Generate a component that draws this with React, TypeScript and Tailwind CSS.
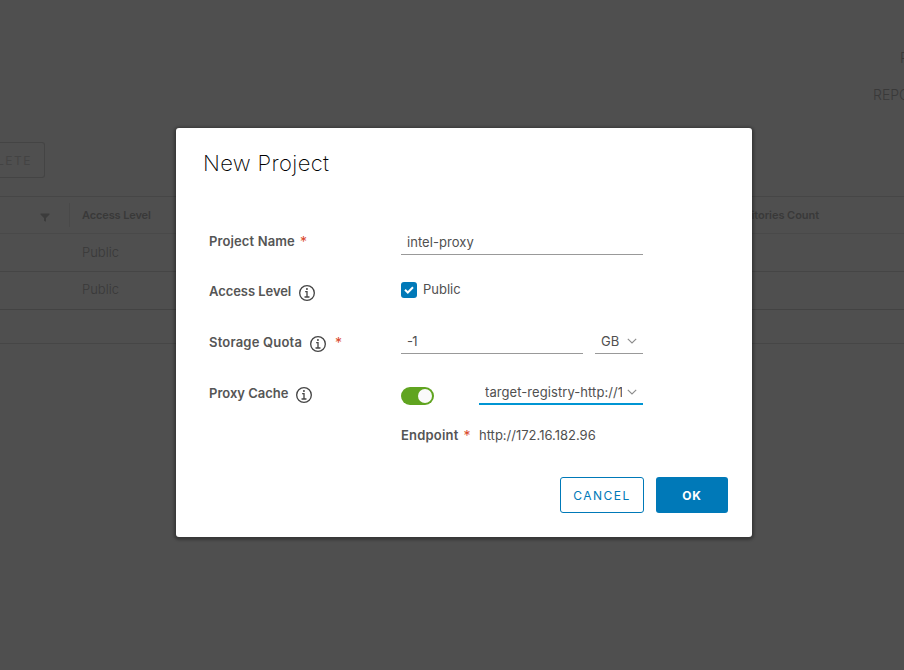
import type { ReactNode } from "react";

function InfoIcon({ className }: { className: string }) {
  return (
    <svg viewBox="6 6 24 24" className={`size-4 shrink-0 fill-[#454545] ${className}`}>
      <circle cx="17.93" cy="11.9" r="1.5" />
      <path d="M21,23H19V15H16a1,1,0,0,0,0,2h1v6H15a1,1,0,1,0,0,2h6a1,1,0,0,0,0-2Z" />
      <path d="M18,6A12,12,0,1,0,30,18,12,12,0,0,0,18,6Zm0,22A10,10,0,1,1,28,18,10,10,0,0,1,18,28Z" />
    </svg>
  );
}

function Chevron() {
  return (
    <svg viewBox="0 0 10 6" className="mt-[-1px] h-1.5 w-2.5 shrink-0 fill-none stroke-[#8c8c8c]">
      <path d="M0.8 0.8 5 5 9.2 0.8" strokeWidth="1.1" />
    </svg>
  );
}

function Required({ className }: { className: string }) {
  return <span className={`text-[14px] font-normal leading-4 text-[#d9472b] ${className}`}>*</span>;
}

function Label({ text, spacing, children }: { text: string; spacing: string; children?: ReactNode }) {
  return (
    <div className="flex h-full w-48 shrink-0 items-center">
      <span className={`text-[13px] font-semibold text-[#555] ${spacing}`}>{text}</span>
      {children}
    </div>
  );
}

function Backdrop() {
  return (
    <div className="flex h-[670px] w-[904px] flex-col overflow-hidden text-[#393939]">
      <div className="flex h-[142px] flex-col items-end pt-[48px] text-[14px] font-light">
        <div className="h-[37px] w-[4px] whitespace-nowrap leading-5">PROJECTS</div>
        <div className="w-[31px] whitespace-nowrap leading-5">REPOSITORIES</div>
      </div>
      <div className="flex h-9 w-[45px] items-center justify-end rounded-r-[3px] border border-l-0 border-[#444] pr-[12px] pt-px text-[12px] tracking-[1.5px] text-[#434343]">
        <span>DELETE</span>
      </div>
      <div className="mt-[18px] flex h-[38px] items-center border-y border-t-[#464646] border-b-[#494949] text-[11px] font-semibold">
        <div className="flex w-[69px] shrink-0 justify-end pr-[19px] pt-1">
          <svg viewBox="0 0 10 9" className="h-[9px] w-[10px] fill-[#3c3c3c]">
            <path d="M0.5 0.5h9v1L6 5v3.7L4 7.8V5L0.5 1.5Z" />
          </svg>
        </div>
        <div className="h-6 w-px shrink-0 bg-[#494949]" />
        <div className="w-[649px] shrink-0 pl-3 tracking-[-0.12px]">Access Level</div>
        <div className="flex w-[100px] shrink-0 justify-end whitespace-nowrap tracking-[-0.05px]">Repositories Count</div>
      </div>
      <div className="flex h-[38px] items-center border-b border-[#454545] pl-[82px] text-[13px] font-light">Public</div>
      <div className="flex h-[38px] items-center border-b border-[#434343] pb-px pl-[82px] text-[13px] font-light">Public</div>
      <div className="h-[34px] border-b border-[#464646]" />
    </div>
  );
}

export default function App() {
  return (
    <div className="relative h-[670px] w-[904px] overflow-hidden bg-[#4f4f4f] font-['Inter',sans-serif]">
      <Backdrop />
      <div className="absolute inset-0 pl-44 pt-32">
        <section className="flex h-[409px] w-[576px] flex-col rounded-[3px] bg-white text-[13px] text-[#505050] shadow-[0_1px_3px_2px_rgba(0,0,0,0.3)]">
          <h1 className="flex h-[88px] items-start pl-[27px] pt-[20px] text-[22px] font-extralight leading-[30px] tracking-[0.36px] text-black">New Project</h1>
          <div className="flex h-[50px] pl-[33px] pt-px">
            <Label text="Project Name" spacing="tracking-[0.12px]">
              <Required className="ml-[5px]" />
            </Label>
            <div className="mt-[14px] flex h-6 w-[242px] items-center border-b border-[#999] pl-[6px] tracking-[0.05px]">intel-proxy</div>
          </div>
          <div className="flex h-[51px] pl-[33px]">
            <Label text="Access Level" spacing="tracking-[-0.06px]">
              <InfoIcon className="ml-2 mt-[3px]" />
            </Label>
            <div className="flex h-[47px] items-center">
              <span className="mr-[6px] flex size-4 items-center justify-center rounded-[3px] bg-[#0079b8]">
                <svg viewBox="0 0 10 8" className="h-2 w-2.5 fill-none stroke-white">
                  <path d="M1 3.8 3.8 6.5 9 1.3" strokeWidth="2" />
                </svg>
              </span>
              Public
            </div>
          </div>
          <div className="flex h-[51px] pl-[33px]">
            <Label text="Storage Quota" spacing="tracking-[0.2px]">
              <InfoIcon className="ml-2 mt-[3px]" />
              <Required className="ml-[9px]" />
            </Label>
            <div className="mt-[13px] flex h-6 w-[182px] items-center border-b border-[#999] pl-[6px] tracking-[-0.8px]">-1</div>
            <div className="ml-3 mt-[13px] flex h-6 w-12 items-center justify-between border-b border-[#999] pl-[6px] pr-[6px]">
              GB
              <Chevron />
            </div>
          </div>
          <div className="flex h-[51px] pl-[33px]">
            <Label text="Proxy Cache" spacing="tracking-[0px]">
              <InfoIcon className="ml-[7px] mt-[3px]" />
            </Label>
            <div className="mt-[19px] flex h-[18px] w-[33px] items-center justify-end rounded-full bg-[#60a420] pr-[2px]">
              <span className="size-[14px] rounded-full bg-[#fafafa]" />
            </div>
            <div className="ml-[45px] mt-[13px] flex h-6 w-[164px] items-center justify-between border-b-2 border-[#0095d3] pl-[6px] pr-[6px]">
              <span className="w-[137px] overflow-hidden whitespace-nowrap pt-px tracking-[0.07px]">target-registry-http://172.16.182.96</span>
              <Chevron />
            </div>
          </div>
          <div className="flex h-[33px] items-center pl-[225px]">
            <div className="flex w-[78px] items-center">
              <span className="font-semibold tracking-[0.2px] text-[#555]">Endpoint</span>
              <Required className="ml-[5px]" />
            </div>
            <span>http://172.16.182.96</span>
          </div>
          <div className="mt-[25px] flex justify-end gap-3 pr-6 text-[12px]">
            <button className="h-9 w-[84px] rounded-[3px] border border-[#0079b8] pt-px tracking-[1.5px] text-[#0079b8]">CANCEL</button>
            <button className="h-9 w-[72px] rounded-[3px] bg-[#0079b8] pt-px font-bold tracking-[0.9px] text-white">OK</button>
          </div>
        </section>
      </div>
    </div>
  );
}
